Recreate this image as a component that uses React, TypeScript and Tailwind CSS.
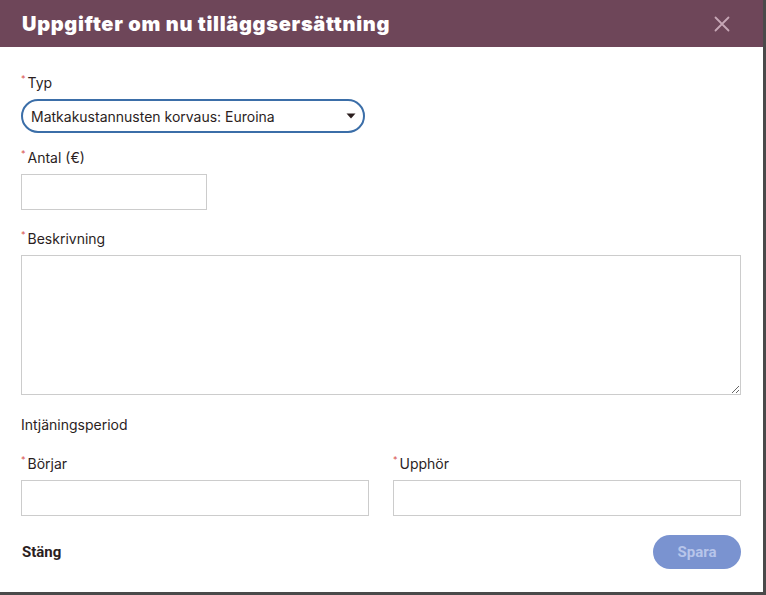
import React from "react";

function Req({ children }: { children: React.ReactNode }) {
  return (
    <div className="flex items-start h-[20px] leading-[20px] text-[14px] text-[#2b1e1e]">
      <span className="text-[#d9534f] text-[9px] leading-[12px] mr-[2px]">*</span>
      <span>{children}</span>
    </div>
  );
}

export default function App() {
  return (
    <div className="w-[766px] h-[595px] bg-[#4a4a4a] overflow-hidden" style={{ fontFamily: "Inter, 'Noto Sans', sans-serif" }}>
      <div className="w-[763px] h-[592px] bg-white flex flex-col">
        <div className="h-[47px] bg-[#6e4659] flex items-center justify-between pl-[22px] pr-[33px] shrink-0">
          <h1 className="text-white text-[20px] font-black tracking-[0.7px]">Uppgifter om nu tilläggsersättning</h1>
          <svg width="16" height="16" viewBox="0 0 16 16" className="mt-[1px]">
            <path d="M1.5 1.5 L14.5 14.5 M14.5 1.5 L1.5 14.5" stroke="#c7a7b6" strokeWidth="1.8" strokeLinecap="round" />
          </svg>
        </div>
        <div className="px-[21px] flex flex-col">
          <div className="mt-[26px]"><Req>Typ</Req></div>
          <div className="mt-[6px] w-[344px] h-[34px] rounded-full border-2 border-[#3b6ea8] flex items-center justify-between pl-[8px] pr-[7px]">
            <span className="text-[14px] text-[#2b1e1e]">Matkakustannusten korvaus: Euroina</span>
            <svg width="10" height="6" viewBox="0 0 10 6"><path d="M0.5 0.5 L9.5 0.5 L5 5.5 Z" fill="#2b1e1e" /></svg>
          </div>
          <div className="mt-[15px]"><Req>Antal (€)</Req></div>
          <input className="mt-[6px] w-[186px] h-[36px] border border-[#cccccc] outline-none" />
          <div className="mt-[19px]"><Req>Beskrivning</Req></div>
          <textarea className="mt-[6px] w-[720px] h-[140px] border border-[#cccccc] outline-none resize" />
          <div className="mt-[20px] h-[20px] leading-[20px] text-[14px] text-[#2b1e1e]">Intjäningsperiod</div>
          <div className="mt-[19px] grid grid-cols-2 gap-x-[24px] w-[720px]">
            <div className="flex flex-col">
              <Req>Börjar</Req>
              <input className="mt-[6px] h-[36px] border border-[#cccccc] outline-none" />
            </div>
            <div className="flex flex-col">
              <Req>Upphör</Req>
              <input className="mt-[6px] h-[36px] border border-[#cccccc] outline-none" />
            </div>
          </div>
          <div className="mt-[19px] flex items-center justify-between w-[720px]" style={{ fontFamily: "Roboto, sans-serif" }}>
            <span className="ml-[1px] text-[15px] font-bold text-[#2b1e1e]">Stäng</span>
            <button className="w-[88px] h-[34px] rounded-full bg-[#7a93d0] text-[#b7c5ea] text-[15px] font-bold">Spara</button>
          </div>
        </div>
      </div>
    </div>
  );
}
